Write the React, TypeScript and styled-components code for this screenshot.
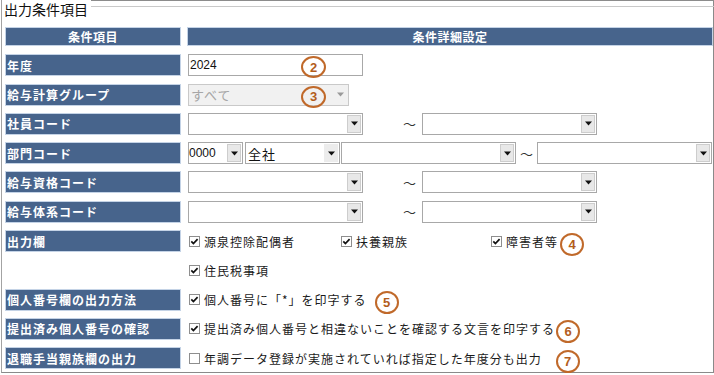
import React from "react";
import styled, { createGlobalStyle } from "styled-components";

const Global = createGlobalStyle`
  html, body { margin: 0; padding: 0; background: #ffffff; }
  body { font-family: "Noto Sans CJK JP", "Noto Sans", sans-serif; color: #1a1a1a; }
`;

const Frame = styled.div`
  width: 714px;
  height: 373px;
  box-sizing: border-box;
  margin-left: 1px;
  width: 713px;
  border-left: 1px solid #a3a3a3;
  border-right: 1px solid #8a8a8a;
  border-bottom: 1px solid #8a8a8a;
  padding-left: 3px;
`;

const TitleRow = styled.div`
  display: flex;
  height: 20px;
  margin-left: -1px;
  margin-right: -1px;
`;

const Title = styled.div`
  font-size: 14px;
  line-height: 18px;
  color: #111;
  padding-right: 3px;
`;

const Rule = styled.div`
  flex: 1;
  height: 7px;
  box-sizing: border-box;
  border-top: 1px solid #8c8c8c;
  border-bottom: 1px solid #c9c9c9;
`;

const Table = styled.div`
  display: grid;
  grid-template-columns: 176px 526px;
  grid-template-rows: 20px;
  grid-auto-rows: 22px;
  column-gap: 6px;
  row-gap: 7.3px;
  margin-top: 7px;
  & > :nth-child(-n + 2) {
    margin-bottom: 1px;
  }
`;

const BlueCell = styled.div`
  background: #47648c;
  border: 1px solid #c4d3e6;
  box-sizing: border-box;
  color: #ffffff;
  font-weight: 700;
  font-size: 12px;
  display: flex;
  align-items: center;
`;

const HeadLabel = styled(BlueCell)`
  justify-content: center;
  letter-spacing: 0.5px;
`;

const HeadDetail = styled(BlueCell)`
  justify-content: center;
  letter-spacing: 0.5px;
`;

const Label = styled(BlueCell)`
  padding-left: 1px;
  letter-spacing: 1px;
`;

const EmptyLabel = styled.div``;

const Cell = styled.div`
  position: relative;
  display: flex;
  align-items: center;
  padding-left: 1px;
  font-size: 12px;
  letter-spacing: 1px;
`;

const TextInput = styled.input`
  width: 175px;
  height: 22px;
  box-sizing: border-box;
  border: 1px solid #a8a8a8;
  padding: 0 1px;
  margin: 0;
  font-family: "Liberation Sans", sans-serif;
  font-size: 12px;
  color: #111;
  background: #fff;
  outline: none;
`;

const SelectBox = styled.div<{ $w: number; $disabled?: boolean }>`
  width: ${(p) => p.$w}px;
  height: 22px;
  box-sizing: border-box;
  border: 1px solid ${(p) => (p.$disabled ? "#c9c9c9" : "#a8a8a8")};
  background: ${(p) => (p.$disabled ? "#f1f1f1" : "#ffffff")};
  display: flex;
  flex-shrink: 0;
`;

const SelectValue = styled.span<{ $disabled?: boolean; $digits?: boolean }>`
  flex: 1;
  display: flex;
  align-items: center;
  padding-left: ${(p) => (p.$digits ? 0 : 2)}px;
  font-family: ${(p) =>
    p.$digits ? '"Liberation Sans", sans-serif' : '"Noto Sans CJK JP", sans-serif'};
  font-size: ${(p) => (p.$digits ? 12 : 13)}px;
  letter-spacing: ${(p) => (p.$digits ? 0 : 1)}px;
  color: ${(p) => (p.$disabled ? "#a6a6a6" : "#111")};
  white-space: nowrap;
  overflow: hidden;
`;

const ArrowBtn = styled.span<{ $variant: "button" | "flat" | "plain" }>`
  width: 14px;
  margin: 1px;
  box-sizing: border-box;
  display: flex;
  align-items: center;
  justify-content: center;
  background: ${(p) =>
    p.$variant === "button" ? "#e8e8e8" : p.$variant === "flat" ? "#ececec" : "transparent"};
  border: ${(p) => (p.$variant === "button" ? "1px solid #cdcdcd" : "none")};
`;

const Tilde = styled.span<{ $before: number; $after: number }>`
  margin-left: ${(p) => p.$before}px;
  margin-right: ${(p) => p.$after}px;
  font-size: 13px;
  letter-spacing: 0;
  color: #333;
`;

const Gap = styled.span<{ $w: number }>`
  width: ${(p) => p.$w}px;
  flex-shrink: 0;
`;

const Overlay = styled.span<{ $left: number }>`
  position: absolute;
  left: ${(p) => p.$left}px;
  top: 2px;
  width: 25px;
  height: 22px;
  box-sizing: border-box;
  border: 2px solid #c0692a;
  border-radius: 50%;
  display: flex;
  align-items: center;
  justify-content: center;
  font-family: "Liberation Sans", sans-serif;
  font-weight: 700;
  font-size: 13px;
  letter-spacing: 0;
  color: #b35d1c;
`;

const Badge = styled.span<{ $gap: number }>`
  margin-left: ${(p) => p.$gap}px;
  margin-top: 6px;
  width: 24px;
  height: 23px;
  box-sizing: border-box;
  border: 2px solid #c0692a;
  border-radius: 50%;
  display: flex;
  align-items: center;
  justify-content: center;
  font-family: "Liberation Sans", sans-serif;
  font-weight: 700;
  font-size: 13px;
  letter-spacing: 0;
  color: #b35d1c;
  flex-shrink: 0;
`;

const CheckGrid = styled.div`
  display: grid;
  grid-template-columns: 152px 150px auto;
  align-items: center;
`;

const CheckItem = styled.label`
  display: flex;
  align-items: center;
  padding-left: 1px;
  white-space: nowrap;
`;

const CheckText = styled.span`
  margin-left: 4px;
  color: #1a1a1a;
`;

const Arrow = ({ muted }: { muted?: boolean }) => (
  <svg width="7" height="5" viewBox="0 0 7 5">
    <polygon points="0,0.5 7,0.5 3.5,4.5" fill={muted ? "#9a9a9a" : "#111"} />
  </svg>
);

const Box = ({ checked }: { checked: boolean }) => (
  <svg width="11" height="11" viewBox="0 0 11 11">
    <rect x="0.5" y="0.5" width="10" height="10" fill="#fff" stroke="#8e8e8e" />
    {checked && (
      <path d="M2.3 5.4 L4.4 7.6 L8.6 3.1" fill="none" stroke="#111" strokeWidth="1.7" />
    )}
  </svg>
);

const Check = ({ checked = true, children }: { checked?: boolean; children: React.ReactNode }) => (
  <CheckItem>
    <Box checked={checked} />
    <CheckText>{children}</CheckText>
  </CheckItem>
);

const Select = ({
  w,
  value = "",
  variant = "button",
  disabled,
  digits,
}: {
  w: number;
  value?: string;
  variant?: "button" | "flat" | "plain";
  disabled?: boolean;
  digits?: boolean;
}) => (
  <SelectBox $w={w} $disabled={disabled}>
    <SelectValue $disabled={disabled} $digits={digits}>
      {value}
    </SelectValue>
    <ArrowBtn $variant={variant}>
      <Arrow muted={disabled} />
    </ArrowBtn>
  </SelectBox>
);

const CodeRange = () => (
  <>
    <Select w={175} />
    <Tilde $before={40} $after={6}>～</Tilde>
    <Select w={175} />
  </>
);

export default function App() {
  return (
    <>
      <Global />
      <Frame>
        <TitleRow>
          <Title>出力条件項目</Title>
          <Rule />
        </TitleRow>
        <Table>
          <HeadLabel>条件項目</HeadLabel>
          <HeadDetail>条件詳細設定</HeadDetail>

          <Label>年度</Label>
          <Cell>
            <TextInput defaultValue="2024" readOnly />
            <Overlay $left={114}>2</Overlay>
          </Cell>

          <Label>給与計算グループ</Label>
          <Cell>
            <Select w={161} value="すべて" variant="plain" disabled />
            <Overlay $left={114}>3</Overlay>
          </Cell>

          <Label>社員コード</Label>
          <Cell>
            <CodeRange />
          </Cell>

          <Label>部門コード</Label>
          <Cell>
            <Select w={55} value="0000" digits />
            <Gap $w={2} />
            <Select w={95} value="全社" variant="flat" />
            <Gap $w={1} />
            <Select w={175} />
            <Tilde $before={4} $after={4}>～</Tilde>
            <Select w={175} />
          </Cell>

          <Label>給与資格コード</Label>
          <Cell>
            <CodeRange />
          </Cell>

          <Label>給与体系コード</Label>
          <Cell>
            <CodeRange />
          </Cell>

          <Label>出力欄</Label>
          <Cell>
            <CheckGrid>
              <Check>源泉控除配偶者</Check>
              <Check>扶養親族</Check>
              <CheckItem>
                <Box checked />
                <CheckText>障害者等</CheckText>
                <Badge $gap={2}>4</Badge>
              </CheckItem>
            </CheckGrid>
          </Cell>

          <EmptyLabel />
          <Cell>
            <Check>住民税事項</Check>
          </Cell>

          <Label>個人番号欄の出力方法</Label>
          <Cell>
            <Check>個人番号に「*」を印字する</Check>
            <Badge $gap={8}>5</Badge>
          </Cell>

          <Label>提出済み個人番号の確認</Label>
          <Cell>
            <Check>提出済み個人番号と相違ないことを確認する文言を印字する</Check>
            <Badge $gap={1}>6</Badge>
          </Cell>

          <Label>退職手当親族欄の出力</Label>
          <Cell>
            <Check checked={false}>年調データ登録が実施されていれば指定した年度分も出力</Check>
            <Badge $gap={14}>7</Badge>
          </Cell>
        </Table>
      </Frame>
    </>
  );
}
